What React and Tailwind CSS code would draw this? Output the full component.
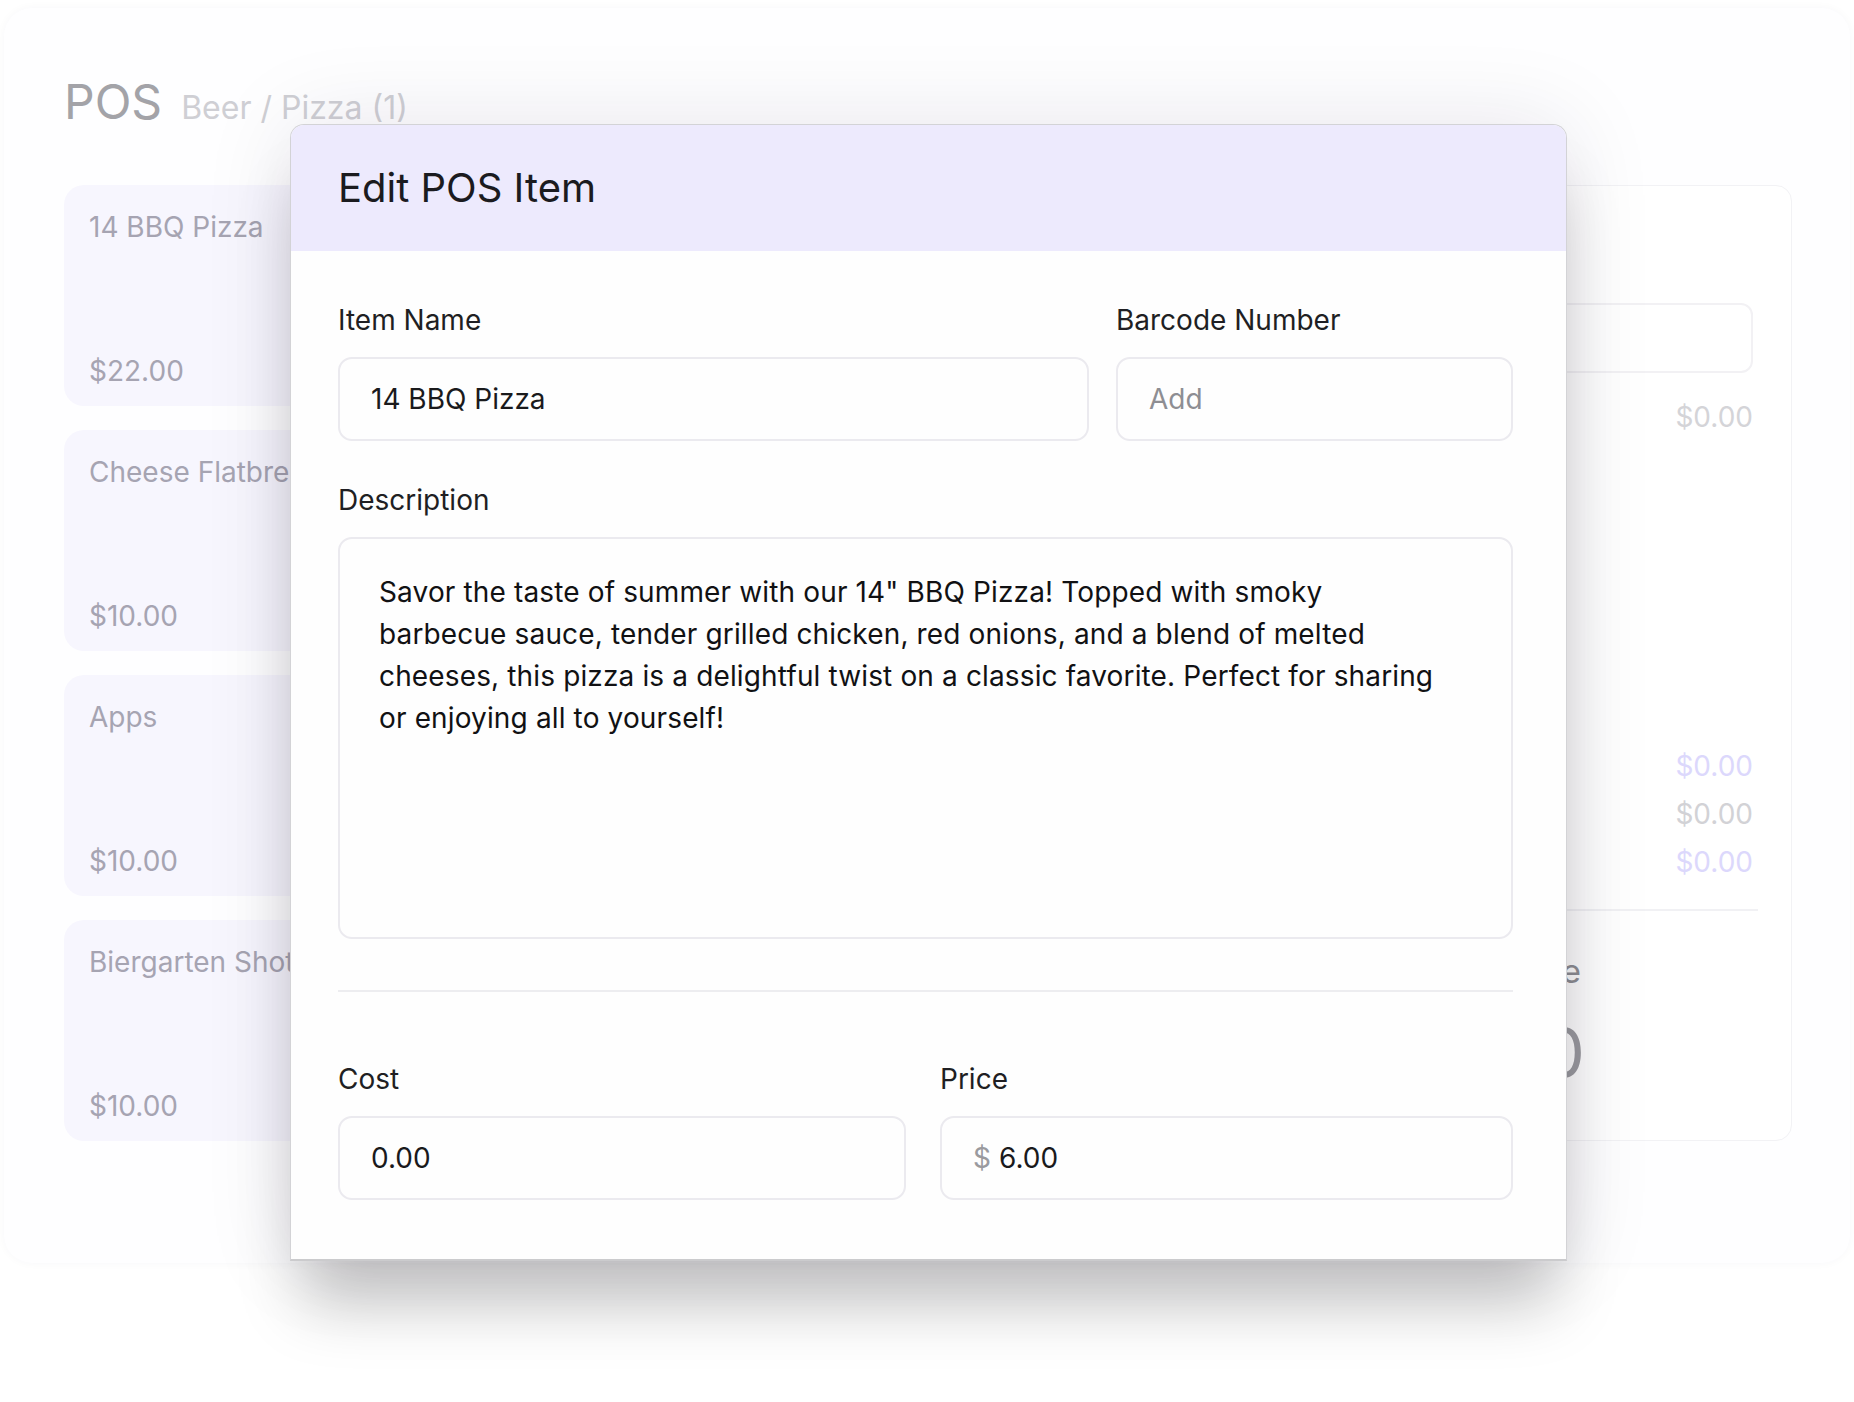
import React from 'react'

const cards = [
  { name: '14 BBQ Pizza', price: '$22.00' },
  { name: 'Cheese Flatbread', price: '$10.00' },
  { name: 'Apps', price: '$10.00' },
  { name: 'Biergarten Shots', price: '$10.00' },
]

const description = [
  'Savor the taste of summer with our 14" BBQ Pizza! Topped with smoky',
  'barbecue sauce, tender grilled chicken, red onions, and a blend of melted',
  'cheeses, this pizza is a delightful twist on a classic favorite. Perfect for sharing',
  'or enjoying all to yourself!',
]

function Field({ label, children, className }) {
  return (
    <div className={className}>
      <div className="text-[28px] leading-none text-[#1f1f23]">{label}</div>
      <div className="mt-[23px] h-[84px] border-2 border-[#ebeaef] rounded-[14px] px-[31px] flex items-center text-[28px] leading-none text-[#1a1a1c] bg-[#fefefe]">
        {children}
      </div>
    </div>
  )
}

export default function App() {
  return (
    <div className="relative w-[1854px] h-[1402px] overflow-hidden bg-white font-['Inter',sans-serif]">
      {/* background page */}
      <div className="mt-[8px] mx-[4px] h-[1255px] rounded-[28px] bg-[#fefeff] shadow-[0_0_10px_rgba(40,30,90,0.035)] pl-[60px] pr-[58px] pt-[70px]">
        <div className="flex items-baseline gap-[19px]">
          <span className="text-[48px] leading-none text-[#a3a3a8]">POS</span>
          <span className="text-[32px] leading-none text-[#cfcfd4]">Beer / Pizza (1)</span>
        </div>

        <div className="mt-[59px] flex">
          <div className="w-[420px] flex flex-col gap-[24px]">
            {cards.map((c, i) => (
              <div key={i} className="h-[221px] rounded-[20px] bg-[#f7f6fe] px-[25px] pt-[28px] pb-[21px] flex flex-col justify-between text-[28px] leading-none text-[#a6a4b2] whitespace-nowrap overflow-hidden">
                <div>{c.name}</div>
                <div>{c.price}</div>
              </div>
            ))}
          </div>

          <div className="ml-auto w-[560px] h-[956px] rounded-[16px] border border-[#f2f2f5] bg-white px-[38px] pt-[117px]">
            <div className="h-[70px] rounded-[12px] border-2 border-[#f2f1f4]" />
            <div className="mt-[30px] text-right text-[28px] leading-none text-[#d4d4d8]">$0.00</div>
            <div className="mt-[311px] text-right text-[28px] leading-[48px]">
              <div className="text-[#dcd8fc]">$0.00</div>
              <div className="text-[#d2d2d6]">$0.00</div>
              <div className="text-[#dcd8fc]">$0.00</div>
            </div>
            <div className="mt-[23px] h-[2px] bg-[#f1f1f4] -mr-[5px]" />
            <div className="pr-[172px] text-right">
              <div className="mt-[44px] text-[33px] leading-none text-[#8f8f94]">Balance</div>
              <div className="mt-[30px] text-[68px] leading-none text-[#9c9ca1] -mr-[4px]">$0.00</div>
            </div>
          </div>
        </div>
      </div>

      {/* modal */}
      <div className="absolute left-[290px] top-[124px] w-[1277px] h-[1137px] rounded-t-[14px] border border-[#d3d3d6] border-b-2 border-b-[#cbcbcd] bg-[#fefefe] overflow-hidden shadow-[0_55px_65px_-12px_rgba(0,0,0,0.22),0_0_90px_rgba(30,20,60,0.1)]">
        <div className="h-[126px] bg-[#edeafd] pl-[47px] flex items-center">
          <h1 className="text-[40px] leading-none text-[#1b1b1f]">Edit POS Item</h1>
        </div>

        <div className="pl-[47px] pr-[53px] pt-[55px]">
          <div className="flex gap-[27px]">
            <Field label="Item Name" className="w-[751px]">14 BBQ Pizza</Field>
            <Field label="Barcode Number" className="flex-1">
              <span className="text-[#8e8e93]">Add</span>
            </Field>
          </div>

          <div className="mt-[45px] text-[28px] leading-none text-[#1f1f23]">Description</div>
          <div className="mt-[23px] h-[402px] border-2 border-[#ebeaef] rounded-[14px] pl-[39px] pt-[32px] text-[28px] tracking-[0.005em] leading-[42px] text-[#111113] whitespace-nowrap">
            {description.map((line, i) => (
              <div key={i}>{line}</div>
            ))}
          </div>

          <div className="mt-[51px] h-[2px] bg-[#ededf0]" />

          <div className="mt-[73px] grid grid-cols-[568px_1fr] gap-[34px]">
            <Field label="Cost">0.00</Field>
            <Field label="Price">
              <span className="text-[#9a9a9e] mr-[8px]">$</span>6.00
            </Field>
          </div>
        </div>
      </div>
    </div>
  )
}
